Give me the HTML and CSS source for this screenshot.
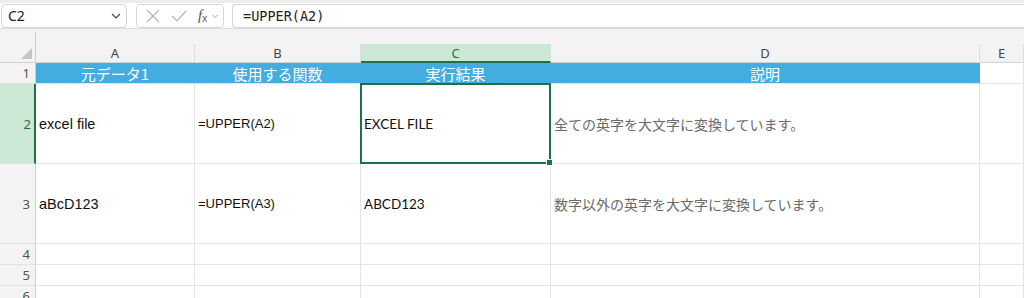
FILE: index.html
```html
<!DOCTYPE html>
<html lang="ja">
<head>
    <meta charset="UTF-8">
    <meta name="viewport" content="width=device-width, initial-scale=1.0">
    <title>UPPER関数</title>
    <link rel="stylesheet" href="styles.css">
</head>
<body>

<div class="toolbar">
    <div class="name-box">
        <span>C2</span>
        <svg width="12" height="12" viewBox="0 0 12 12"><path d="M2 4 L6 8 L10 4" fill="none" stroke="#444" stroke-width="1.2"/></svg>
    </div>
    <div class="fx-buttons">
        <svg width="16" height="16" viewBox="0 0 16 16"><path d="M2 2 L14 14 M14 2 L2 14" stroke="#b5b5b5" stroke-width="1.2"/></svg>
        <svg width="18" height="16" viewBox="0 0 18 16"><path d="M2 8 L7 13 L16 3" fill="none" stroke="#b5b5b5" stroke-width="1.2"/></svg>
        <span class="fx"><i>f</i><span class="x">x</span></span>
        <svg width="8" height="8" viewBox="0 0 8 8"><path d="M1.5 3 L4 5.5 L6.5 3" fill="none" stroke="#aaa" stroke-width="1"/></svg>
    </div>
    <div class="formula">=UPPER(A2)</div>
</div>

<div class="sheet">
    <!-- column header band -->
    <div class="corner"><span class="tri"></span></div>
    <div class="gap"></div>
    <div class="colhead">A</div>
    <div class="colhead">B</div>
    <div class="colhead active">C</div>
    <div class="colhead">D</div>
    <div class="colhead">E</div>

    <!-- row 1 -->
    <div class="rowhead">1</div>
    <div class="cell title">元データ1</div>
    <div class="cell title">使用する関数</div>
    <div class="cell title">実行結果</div>
    <div class="cell title">説明</div>
    <div class="cell"></div>

    <!-- row 2 -->
    <div class="rowhead active">2</div>
    <div class="cell src">excel file</div>
    <div class="cell fn">=UPPER(A2)</div>
    <div class="cell res selected">EXCEL FILE</div>
    <div class="cell note">全ての英字を大文字に変換しています。</div>
    <div class="cell"></div>

    <!-- row 3 -->
    <div class="rowhead">3</div>
    <div class="cell src">aBcD123</div>
    <div class="cell fn">=UPPER(A3)</div>
    <div class="cell res">ABCD123</div>
    <div class="cell note">数字以外の英字を大文字に変換しています。</div>
    <div class="cell"></div>

    <div class="rowhead">4</div>
    <div class="cell"></div><div class="cell"></div><div class="cell"></div><div class="cell"></div><div class="cell"></div>

    <div class="rowhead">5</div>
    <div class="cell"></div><div class="cell"></div><div class="cell"></div><div class="cell"></div><div class="cell"></div>

    <div class="rowhead">6</div>
    <div class="cell"></div><div class="cell"></div><div class="cell"></div><div class="cell"></div><div class="cell"></div>
</div>

</body>
</html>
```

FILE: styles.css
```css
* {
    box-sizing: border-box;
}

body {
    margin: 0;
    background: #f3f3f3;
    font-family: "Liberation Sans", Arial, sans-serif;
    overflow: hidden;
}

/* formula bar */
.toolbar {
    display: flex;
    align-items: center;
    gap: 8px;
    height: 29px;
    padding: 0 0 0 1px;
    background: #fff;
    border-top: 3px solid #ececec;
    border-bottom: 1px solid #dcdcdc;
}

.name-box {
    display: flex;
    align-items: center;
    justify-content: space-between;
    width: 126px;
    height: 24px;
    padding: 0 4px 0 6px;
    border: 1px solid #d6d6d6;
    border-radius: 4px;
    font-family: "Noto Sans", sans-serif;
    font-size: 14px;
    color: #222;
}

.fx-buttons {
    display: flex;
    align-items: center;
    gap: 9px;
    width: 88px;
    height: 24px;
    margin-left: 1px;
    padding-left: 8px;
    border: 1px solid #d6d6d6;
    border-radius: 4px;
}

.fx {
    font-family: "Liberation Serif", serif;
    font-size: 15px;
    color: #555;
    margin-left: 1px;
}

.fx .x {
    font-family: "Liberation Sans", sans-serif;
    font-size: 10px;
    position: relative;
    top: 2px;
}

.fx-buttons svg:last-child {
    margin-left: -5px;
}

.formula {
    flex: 1;
    height: 24px;
    padding: 2px 10px;
    border: 1px solid #d6d6d6;
    border-right: none;
    border-radius: 4px 0 0 4px;
    font-family: "DejaVu Sans Mono", monospace;
    font-size: 13.5px;
    line-height: 18px;
    color: #222;
}

/* sheet grid */
.sheet {
    display: grid;
    grid-template-columns: 36px 159px 166px 190px 429px 1fr;
    grid-template-rows: 15px 19px 21px 80px 80px 21px 21px 21px;
}

.corner {
    grid-row: 1 / 3;
    position: relative;
    border-right: 1px solid #cfcfcf;
    border-bottom: 1px solid #cfcfcf;
    margin-top: 3px;
}

.corner .tri {
    position: absolute;
    right: 3px;
    bottom: 3px;
    width: 0;
    height: 0;
    border-left: 11px solid transparent;
    border-bottom: 11px solid #c4c4c4;
}

.gap {
    grid-column: 2 / 7;
}

.colhead {
    display: flex;
    align-items: center;
    justify-content: center;
    font-family: "Noto Sans", sans-serif;
    font-size: 13px;
    color: #444;
    border-right: 1px solid #dedede;
    border-bottom: 1px solid #d4d4d4;
}

.colhead.active {
    background: #cbe8d5;
    color: #1e7145;
    border-bottom: 2px solid #1e7145;
}

.rowhead {
    display: flex;
    align-items: center;
    justify-content: flex-end;
    padding-right: 5px;
    font-family: "Noto Sans", sans-serif;
    font-size: 13px;
    color: #555;
    border-right: 1px solid #cfcfcf;
    border-bottom: 1px solid #e2e2e2;
}

.rowhead.active {
    background: #cbe8d5;
    color: #1e7145;
    border-right: 2px solid #1e7145;
    padding-right: 3px;
}

.cell {
    display: flex;
    align-items: center;
    padding-left: 3px;
    background: #fff;
    border-right: 1px solid #e4e4e4;
    border-bottom: 1px solid #e4e4e4;
    white-space: nowrap;
}

.cell.title {
    justify-content: center;
    padding-left: 0;
    background: #44ade0;
    border-right-color: #44ade0;
    color: #fff;
    font-family: "Noto Sans CJK JP", sans-serif;
    font-size: 15px;
}

.cell.src {
    font-size: 14.5px;
    color: #111;
}

.cell.fn {
    font-size: 13px;
    color: #111;
}

.cell.res {
    font-family: Lato, sans-serif;
    font-size: 13.5px;
    color: #111;
}

.cell.note {
    font-family: "Noto Sans CJK JP", sans-serif;
    font-size: 14px;
    color: #6a6a6a;
}

/* active cell outline */
.cell.selected {
    position: relative;
}

.cell.selected::after {
    content: "";
    position: absolute;
    top: -1px;
    left: -1px;
    right: -1px;
    bottom: -1px;
    border: 2px solid #1e7145;
}

.cell.selected::before {
    content: "";
    position: absolute;
    right: -3px;
    bottom: -3px;
    width: 5px;
    height: 5px;
    background: #1e7145;
    border: 1px solid #fff;
    z-index: 1;
}
```
